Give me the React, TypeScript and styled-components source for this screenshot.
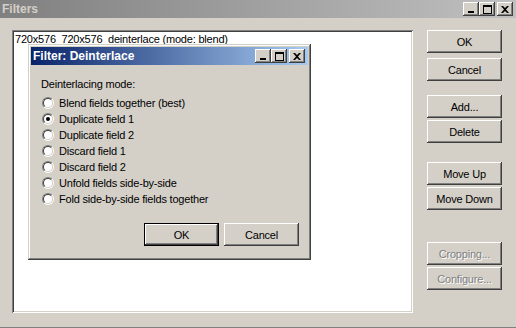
import React from 'react'
import styled, { createGlobalStyle, css } from 'styled-components'

const GlobalStyle = createGlobalStyle`
  html, body {
    margin: 0;
    padding: 0;
    background: #d4d0c8;
  }
  body {
    font-family: 'Liberation Sans', Arial, sans-serif;
    font-size: 11px;
    letter-spacing: -0.2px;
    color: #000;
  }
`

const raised = css`
  box-shadow: inset -1px -1px #404040, inset 1px 1px #ffffff,
    inset -2px -2px #808080, inset 2px 2px #d4d0c8;
`

const Window = styled.div`
  width: 516px;
  height: 328px;
  box-sizing: border-box;
  display: flex;
  flex-direction: column;
  background: #d4d0c8;
  border-bottom: 1px solid #808080;
  overflow: hidden;
`

const TitleBar = styled.div<{ $active?: boolean }>`
  height: 18px;
  display: flex;
  align-items: center;
  padding: 0 3px 0 2px;
  background: ${(p) =>
    p.$active
      ? 'linear-gradient(to right, #0a246a, #a6caf0)'
      : 'linear-gradient(to right, #808080, #c0c0c0)'};
  color: ${(p) => (p.$active ? '#ffffff' : '#d4d0c8')};
  font-weight: bold;
  font-size: 12px;
  letter-spacing: 0;
  flex-shrink: 0;
`

const TitleText = styled.span`
  flex: 1;
  white-space: nowrap;
`

const CaptionButtons = styled.div`
  display: flex;
  align-items: center;
`

const CaptionButton = styled.div<{ $gap?: boolean }>`
  width: 16px;
  height: 14px;
  margin-left: ${(p) => (p.$gap ? '2px' : '0')};
  background: #d4d0c8;
  ${raised};
  display: flex;
  align-items: center;
  justify-content: center;
`

const Body = styled.div`
  flex: 1;
  display: flex;
  padding: 12px 14px 0 12px;
  gap: 14px;
`

const ListArea = styled.div`
  position: relative;
  width: 401px;
  height: 283px;
`

const ListBox = styled.div`
  width: 100%;
  height: 100%;
  box-sizing: border-box;
  background: #ffffff;
  box-shadow: inset 1px 1px #808080, inset -1px -1px #ffffff,
    inset 2px 2px #404040, inset -2px -2px #d4d0c8;
  padding: 2px 3px;
`

const ListItem = styled.div`
  height: 14px;
  line-height: 14px;
  white-space: pre;
`

const ButtonColumn = styled.div`
  display: flex;
  flex-direction: column;
  width: 75px;
`

const Button = styled.button<{ $top?: number; $default?: boolean }>`
  width: 75px;
  height: 23px;
  margin: ${(p) => p.$top ?? 0}px 0 0 0;
  padding: 0;
  border: none;
  background: #d4d0c8;
  font-family: 'Liberation Sans', Arial, sans-serif;
  font-size: 11px;
  letter-spacing: -0.2px;
  color: #000;
  ${raised};
  ${(p) =>
    p.$default &&
    css`
      box-shadow: inset 0 0 0 1px #000, inset -2px -2px #404040,
        inset 2px 2px #ffffff, inset -3px -3px #808080;
    `}
  &:disabled {
    color: #808080;
    text-shadow: 1px 1px #ffffff;
  }
`

const Dialog = styled.div`
  position: absolute;
  left: 16px;
  top: 14px;
  width: 283px;
  height: 216px;
  box-sizing: border-box;
  background: #d4d0c8;
  padding: 3px;
  box-shadow: inset -1px -1px #404040, inset 1px 1px #d4d0c8,
    inset -2px -2px #808080, inset 2px 2px #ffffff;
  display: flex;
  flex-direction: column;
`

const DialogContent = styled.div`
  flex: 1;
  padding: 12px 0 0 10px;
  display: flex;
  flex-direction: column;
`

const GroupLabel = styled.div`
  height: 14px;
  line-height: 14px;
  margin-bottom: 4px;
`

const RadioRow = styled.label`
  display: flex;
  align-items: center;
  height: 16px;
`

const Radio = styled.span<{ $checked?: boolean }>`
  position: relative;
  width: 12px;
  height: 12px;
  margin: 0 5px 0 1px;
  box-sizing: border-box;
  border-radius: 50%;
  border: 1px solid;
  border-color: #808080 #ffffff #ffffff #808080;
  &::before {
    content: '';
    position: absolute;
    inset: 0;
    border-radius: 50%;
    border: 1px solid;
    border-color: #404040 #d4d0c8 #d4d0c8 #404040;
    background: #ffffff;
  }
  &::after {
    content: '';
    display: ${(p) => (p.$checked ? 'block' : 'none')};
    position: absolute;
    left: 3px;
    top: 3px;
    width: 4px;
    height: 4px;
    border-radius: 50%;
    background: #000;
  }
`

const DialogButtons = styled.div`
  display: flex;
  justify-content: flex-end;
  gap: 5px;
  padding: 0 9px 11px 0;
`

const MinIcon = () => (
  <svg width="8" height="7" viewBox="0 0 8 7">
    <rect x="1" y="5" width="6" height="2" fill="#000" />
  </svg>
)

const MaxIcon = () => (
  <svg width="9" height="9" viewBox="0 0 9 9">
    <rect x="0.5" y="0.5" width="8" height="8" fill="none" stroke="#000" />
    <rect x="0" y="0" width="9" height="2" fill="#000" />
  </svg>
)

const CloseIcon = () => (
  <svg width="8" height="7" viewBox="0 0 8 7">
    <path d="M0 0h2l2 2 2-2h2L5 3.5 8 7H6L4 5 2 7H0l3-3.5z" fill="#000" />
  </svg>
)

const Caption = () => (
  <CaptionButtons>
    <CaptionButton>
      <MinIcon />
    </CaptionButton>
    <CaptionButton>
      <MaxIcon />
    </CaptionButton>
    <CaptionButton $gap>
      <CloseIcon />
    </CaptionButton>
  </CaptionButtons>
)

const modes = [
  'Blend fields together (best)',
  'Duplicate field 1',
  'Duplicate field 2',
  'Discard field 1',
  'Discard field 2',
  'Unfold fields side-by-side',
  'Fold side-by-side fields together',
]

const App = () => {
  return (
    <>
      <GlobalStyle />
      <Window>
        <TitleBar>
          <TitleText>Filters</TitleText>
          <Caption />
        </TitleBar>
        <Body>
          <ListArea>
            <ListBox>
              <ListItem>{'720x576  720x576  deinterlace (mode: blend)'}</ListItem>
            </ListBox>
            <Dialog>
              <TitleBar $active>
                <TitleText>Filter: Deinterlace</TitleText>
                <Caption />
              </TitleBar>
              <DialogContent>
                <GroupLabel>Deinterlacing mode:</GroupLabel>
                {modes.map((m, i) => (
                  <RadioRow key={m}>
                    <Radio $checked={i === 1} />
                    {m}
                  </RadioRow>
                ))}
              </DialogContent>
              <DialogButtons>
                <Button $default>OK</Button>
                <Button>Cancel</Button>
              </DialogButtons>
            </Dialog>
          </ListArea>
          <ButtonColumn>
            <Button>OK</Button>
            <Button $top={5}>Cancel</Button>
            <Button $top={14}>Add...</Button>
            <Button $top={2}>Delete</Button>
            <Button $top={19}>Move Up</Button>
            <Button $top={2}>Move Down</Button>
            <Button $top={32} disabled>
              Cropping...
            </Button>
            <Button $top={2} disabled>
              Configure...
            </Button>
          </ButtonColumn>
        </Body>
      </Window>
    </>
  )
}

export default App
